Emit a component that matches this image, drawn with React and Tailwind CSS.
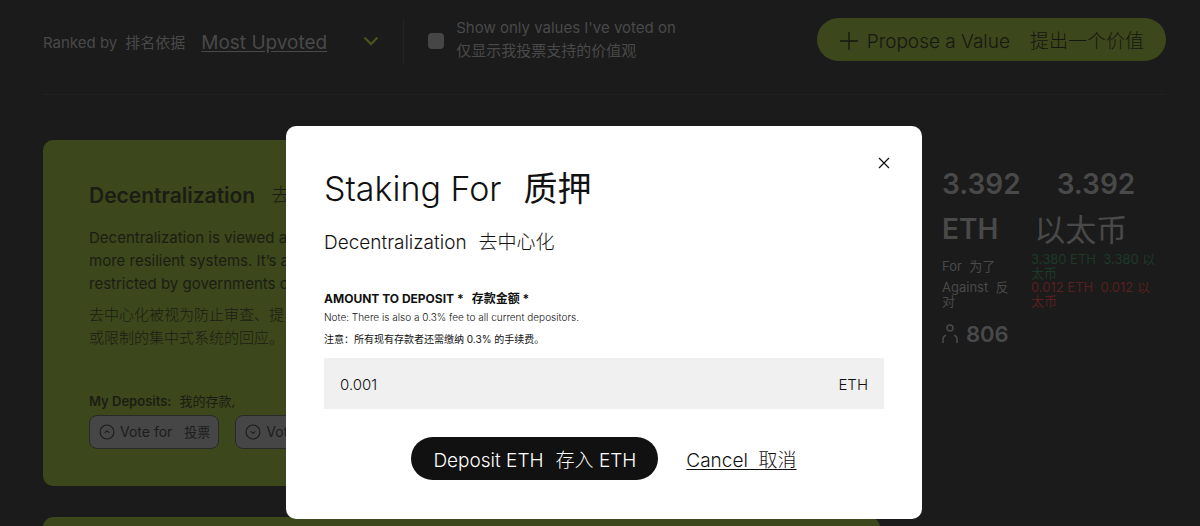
import React, { useState } from "react";

function VoteButton({ direction, label, zh }) {
  return (
    <button className="flex items-center gap-1 h-[34px] px-2 rounded-lg border border-[#29292b] bg-[#464646] text-[#1c1c1c] text-sm">
      <svg width="18" height="18" viewBox="0 0 16 16" fill="none" stroke="currentColor" strokeWidth="1">
        <circle cx="8" cy="8" r="6.2" />
        {direction === "up" ? <path d="M5.9 8.800 8 7l2.100 1.800" /> : <path d="M5.900 7.400 8 9.200l2.100-1.800" />}
      </svg>
      <span>{label}</span>
      {zh && <span className="ml-2 text-[13px]">{zh}</span>}
    </button>
  );
}

function Toolbar() {
  return (
    <header className="flex items-start justify-between pt-[18px] pb-[30px] border-b border-[#212121]">
      <div className="flex items-center text-[#494949]">
        <span className="pt-1 text-[15px]">Ranked by</span>
        <span className="ml-2 pt-1 text-[15px]">排名依据</span>
        <button className="ml-4 flex items-center justify-between w-[178px] text-[19px]">
          <span className="pt-1 underline underline-offset-2">Most Upvoted</span>
          <svg width="16" height="10" viewBox="0 0 16 10" fill="none" stroke="#46531a" strokeWidth="2.400">
            <path d="M1.500 1.500 8 8l6.500-6.500" />
          </svg>
        </button>
        <label className="ml-6 flex items-center gap-3 h-[46px] border-l border-[#232323] pl-6 text-[15px]">
          <input type="checkbox" className="appearance-none size-4 rounded-sm bg-[#464646]" />
          <span className="pb-1 leading-[23px]">
            <span className="block">Show only values I've voted on</span>
            <span className="block">仅显示我投票支持的价值观</span>
          </span>
        </label>
      </div>
      <button className="flex items-center h-[43px] px-[22px] rounded-full bg-[#3c471b] text-[#151712] text-[19px] font-light">
        <svg width="20" height="20" viewBox="0 0 20 20" stroke="currentColor" strokeWidth="1.300">
          <path d="M1 11h18M10 2v18" />
        </svg>
        <span className="ml-2 pt-1.5">Propose a Value</span>
        <span className="ml-5 pt-1.5">提出一个价值</span>
      </button>
    </header>
  );
}

function ValueCard() {
  return (
    <article className="flex-1 rounded-[10px] bg-[#3c471b] text-[#1b1d14] px-[46px] pt-10 pb-[37px]">
      <h2 className="flex items-center gap-4 text-[21px] leading-8 font-semibold">
        Decentralization <span className="text-[19px] font-light">去</span>
      </h2>
      <p className="mt-[14px] text-[15px] leading-[23px]">
        Decentralization is viewed as
        <br />
        more resilient systems. It’s a
        <br />
        restricted by governments or
      </p>
      <p className="mt-2 text-[15px] leading-[23px] font-light">
        去中心化被视为防止审查、提
        <br />
        或限制的集中式系统的回应。
      </p>
      <div className="mt-10 flex items-center gap-2 text-[13px] leading-6">
        <span className="font-semibold">My Deposits:</span>
        <span>我的存款,</span>
      </div>
      <div className="mt-[2px] flex gap-4">
        <VoteButton direction="up" label="Vote for" zh="投票" />
        <VoteButton direction="down" label="Vote" />
      </div>
    </article>
  );
}

function Stats() {
  return (
    <aside className="w-[224px] pt-[22px] text-[#494949]">
      <div className="flex gap-9 text-[28px] leading-[45px] font-semibold">
        <span>3.392</span>
        <span>3.392</span>
      </div>
      <div className="flex gap-9 text-[28px] leading-[45px] font-semibold">
        <span>ETH</span>
        <span className="text-[31px] font-normal">以太币</span>
      </div>
      <dl className="grid grid-cols-[73px_1fr] gap-x-4 items-center text-[13px] leading-[14px]">
        <dt>For &nbsp;为了</dt>
        <dd className="pr-2 text-[#1b3a28]">3.380 ETH &nbsp;3.380 以太币</dd>
        <dt>Against &nbsp;反对</dt>
        <dd className="pr-2 text-[#581f1f]">0.012 ETH &nbsp;0.012 以太币</dd>
      </dl>
      <div className="mt-[10px] flex items-center gap-2 text-[22px] leading-8 font-semibold">
        <svg width="16" height="20" viewBox="0 0 16 20" fill="none" stroke="currentColor" strokeWidth="1.600">
          <circle cx="8" cy="4" r="3" />
          <path d="M1 19v-3.500c0-2 1-3.500 2.800-4.500M15 19v-3.500c0-2-1-3.500-2.800-4.500" />
        </svg>
        806
      </div>
    </aside>
  );
}

function StakeModal() {
  const [amount, setAmount] = useState("0.001");

  return (
    <div className="fixed inset-0 flex items-start justify-center pl-2 pt-[126px]">
      <div role="dialog" aria-modal="true" className="relative w-[636px] rounded-[10px] bg-white px-[38px] pt-10 pb-[39px] text-[#111]">
        <button aria-label="Close" className="absolute right-8 top-[31px]">
          <svg width="12" height="12" viewBox="0 0 12 12" stroke="currentColor" strokeWidth="1.200">
            <path d="M1 1l10 10M11 1 1 11" />
          </svg>
        </button>
        <h1 className="flex items-center gap-[22px] text-[34px] leading-[46px] font-light">
          Staking For <span className="font-normal">质押</span>
        </h1>
        <h2 className="mt-[17px] flex items-center gap-3 text-[19px] leading-7 font-light">
          Decentralization <span>去中心化</span>
        </h2>
        <form onSubmit={(e) => e.preventDefault()}>
          <label htmlFor="amount" className="mt-[33px] flex gap-2 text-xs leading-[18px] font-bold">
            <span>AMOUNT TO DEPOSIT *</span>
            <span>存款金额 *</span>
          </label>
          <p className="text-[10px] leading-[18px] font-light">Note: There is also a 0.3% fee to all current depositors.</p>
          <p className="mt-1 text-[10px] leading-[18px]">注意：所有现有存款者还需缴纳 0.3% 的手续费。</p>
          <div className="mt-[10px] flex items-center h-[51px] px-4 pt-1 bg-[#f0f0f0] text-[15px] font-light">
            <input
              id="amount"
              value={amount}
              onChange={(e) => setAmount(e.target.value)}
              className="flex-1 bg-transparent outline-none"
            />
            <span>ETH</span>
          </div>
          <div className="mt-7 flex items-center justify-center gap-7 text-[19px] font-light">
            <button type="submit" className="flex items-center gap-3 h-[43px] px-[22px] pt-1.5 rounded-full bg-[#111] text-white">
              <span>Deposit ETH</span>
              <span>存入 ETH</span>
            </button>
            <button type="button" className="pt-1.5 underline underline-offset-2">
              Cancel &nbsp;取消
            </button>
          </div>
        </form>
      </div>
    </div>
  );
}

function App() {
  return (
    <div className="h-screen overflow-hidden bg-[#1b1b1b] pl-[43px] pr-[34px] font-['Inter','Noto_Sans_CJK_SC',sans-serif]">
      <Toolbar />
      <main className="mt-[45px] space-y-[31px]">
        <section className="flex gap-[62px]">
          <ValueCard />
          <Stats />
        </section>
        {/* next card in the list, peeking in below the fold */}
        <section className="flex gap-[62px]">
          <div className="flex-1 h-[346px] rounded-[10px] bg-[#3c471b]" />
          <div className="w-[224px]" />
        </section>
      </main>
      <StakeModal />
    </div>
  );
}

export default App;
